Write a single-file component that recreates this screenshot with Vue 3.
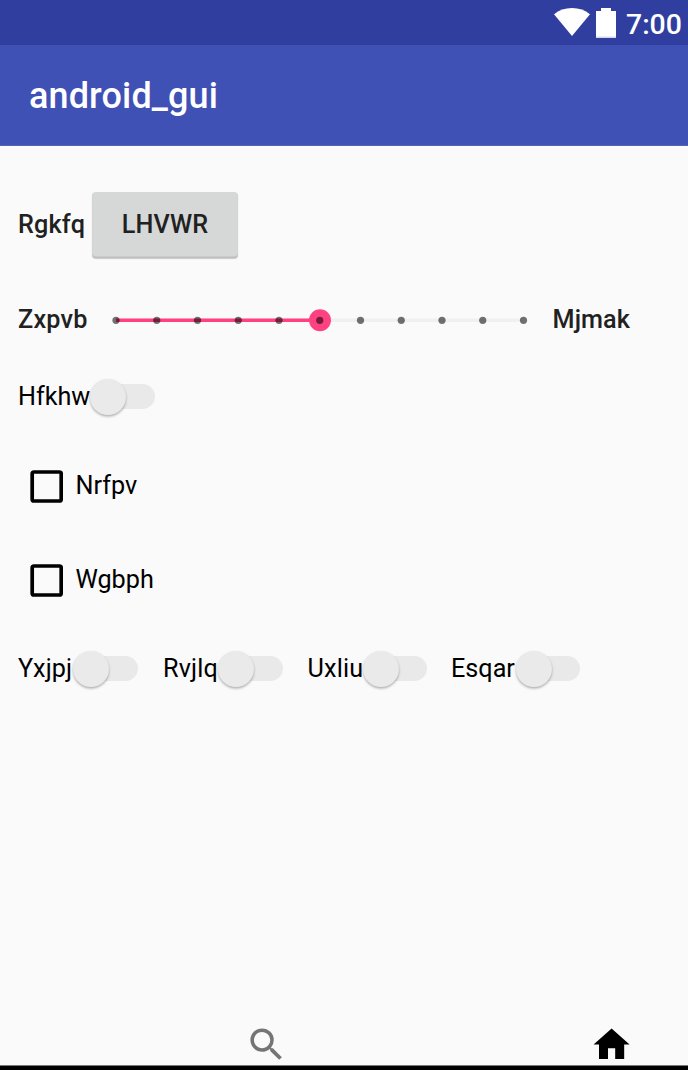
<script setup>
const ticks = Array.from({ length: 11 }, (_, i) => 116 + i * 40.75)
const checks = ['Nrfpv', 'Wgbph']
const switches = ['Yxjpj', 'Rvjlq', 'Uxliu', 'Esqar']
</script>

<template>
  <div class="screen">
    <header class="status">
      <svg class="wifi" width="36" height="28" viewBox="0 0 36 28">
        <path d="M0 6.3C5 2 11 0 18 0s13 2 18 6.3L18 28z" fill="#fff" />
      </svg>
      <svg class="battery" width="20" height="30" viewBox="0 0 20 30">
        <path d="M0 3h5V0h10v3h5v27H0z" fill="#fff" />
        <path d="M0 28.5h20V30H0z" fill="#d5d8ec" />
      </svg>
      <span class="clock">7:00</span>
    </header>
    <div class="appbar"><h1>android_gui</h1></div>

    <main>
      <div class="row action">
        <span class="strong button-label">Rgkfq</span>
        <button type="button">LHVWR</button>
      </div>
      <div class="row slide">
        <span class="strong start">Zxpvb</span>
        <svg class="slider" width="440" height="30" viewBox="100 0 440 30">
          <rect x="116" y="13.5" width="407.5" height="3.5" fill="#f0f0f0" />
          <rect x="116" y="13.5" width="204" height="3.5" fill="#ff4081" />
          <circle cx="320" cy="15.3" r="11" fill="#ff4081" />
          <circle v-for="x in ticks" :key="x" :cx="x" cy="15.3" r="3.6" fill="#000" fill-opacity=".55" />
        </svg>
        <span class="strong end">Mjmak</span>
      </div>
      <div class="row single">
        <span>Hfkhw</span><i class="switch"></i>
      </div>
      <div v-for="c in checks" :key="c" class="row check">
        <svg class="box" width="33" height="33" viewBox="0 0 33 33">
          <rect x="2.2" y="2" width="29" height="29" rx="1.8" fill="none" stroke="#000" stroke-width="3.7" />
        </svg>
        <span>{{ c }}</span>
      </div>
      <div class="row group">
        <div v-for="s in switches" :key="s" class="item">
          <span>{{ s }}</span><i class="switch"></i>
        </div>
      </div>
    </main>

    <nav>
      <svg class="search" width="43.2" height="43.2" viewBox="0 0 24 24">
        <path fill="#757575" d="M15.5 14h-.79l-.28-.27A6.47 6.47 0 0 0 16 9.5 6.5 6.5 0 1 0 9.5 16c1.61 0 3.09-.59 4.23-1.57l.27.28v.79l5 4.99L20.49 19l-4.99-5zm-6 0C7.01 14 5 11.99 5 9.5S7.01 5 9.5 5 14 7.01 14 9.5 11.99 14 9.5 14z" />
      </svg>
      <svg class="home" width="43.2" height="43.2" viewBox="0 0 24 24">
        <path d="M10 20v-6h4v6h5v-8h3L12 3 2 12h3v8z" />
      </svg>
    </nav>
    <div class="edge"></div>
  </div>
</template>

<style>
body { margin: 0; background: #fafafa; }
</style>

<style scoped>
.screen {
  width: 688px; height: 1070px; overflow: hidden;
  display: flex; flex-direction: column;
  background: #fafafa; color: #000;
  font-family: Roboto, sans-serif; font-size: 25.2px; line-height: 30px;
}
.status {
  height: 45px; box-sizing: border-box; flex: none;
  padding: 8px 6px 0 0; background: #303f9f;
  display: flex; justify-content: flex-end; align-items: flex-start;
}
.battery { margin-left: 6px; }
.clock { width: 56px; margin-left: 10px; color: #fff; font-size: 28.4px; font-weight: 500; line-height: 34px; }
.appbar {
  height: 101px; box-sizing: border-box; flex: none; padding: 2px 0 0 29px;
  display: flex; align-items: center;
  background: #3f51b5; border-bottom: 1px solid #5363bc;
}
h1 { margin: 0; color: #fff; font-size: 36px; font-weight: 500; line-height: 44px; letter-spacing: 0.13px; }
main { flex: 1; padding-top: 25px; }
.row { display: flex; align-items: center; padding-left: 18px; white-space: nowrap; }
.row span { flex: none; }
.action { height: 108px; }
.slide { height: 82px; }
.single { height: 72px; }
.check { height: 82px; padding-left: 30px; }
.single + .check { height: 106px; }
.group { height: 96px; display: grid; grid-template-columns: 145px 144.5px 143.5px 140px; }
.strong { font-weight: 500; color: #212121; letter-spacing: 0.2px; }
.button-label { width: 74px; }
button {
  width: 146px; height: 66px; padding: 0; border: 0; border-radius: 4px;
  background: #d6d7d7; box-shadow: inset 0 -1.5px 1px rgba(0, 0, 0, .12), 0 1px 1px rgba(0, 0, 0, .2);
  color: #212121; font: 500 25.2px/30px Roboto, sans-serif; letter-spacing: 0.1px;
}
.start { width: 82px; }
.slider { flex: none; }
.end { margin-left: 12.5px; letter-spacing: 0.1px; }
.item { display: flex; align-items: center; }
.item span { width: 55px; letter-spacing: 0.15px; }
.item:last-child span { width: 64.5px; letter-spacing: 0; }
.single .switch { margin-left: -0.3px; }
.switch { width: 65px; height: 36px; display: flex; align-items: center; }
.switch::before {
  content: ''; width: 36px; height: 36px; flex: none; border-radius: 50%;
  background: #eaeaea; box-shadow: 0 1.5px 2.5px rgba(0, 0, 0, .3);
  z-index: 1;
}
.switch::after {
  content: ''; width: 54px; height: 25px; flex: none; border-radius: 13px;
  margin: 0 0 1px -25.3px; background: #e9e9e9;
}
.box { margin-right: 12.5px; flex: none; }
nav { height: 43px; padding-top: 1px; box-sizing: border-box; display: flex; flex: none; }
.search { margin-left: 244.5px; }
.home { margin-left: 302.3px; }
.edge { height: 5px; flex: none; box-sizing: border-box; border-top: 1px solid #777; background: #000; }
</style>
